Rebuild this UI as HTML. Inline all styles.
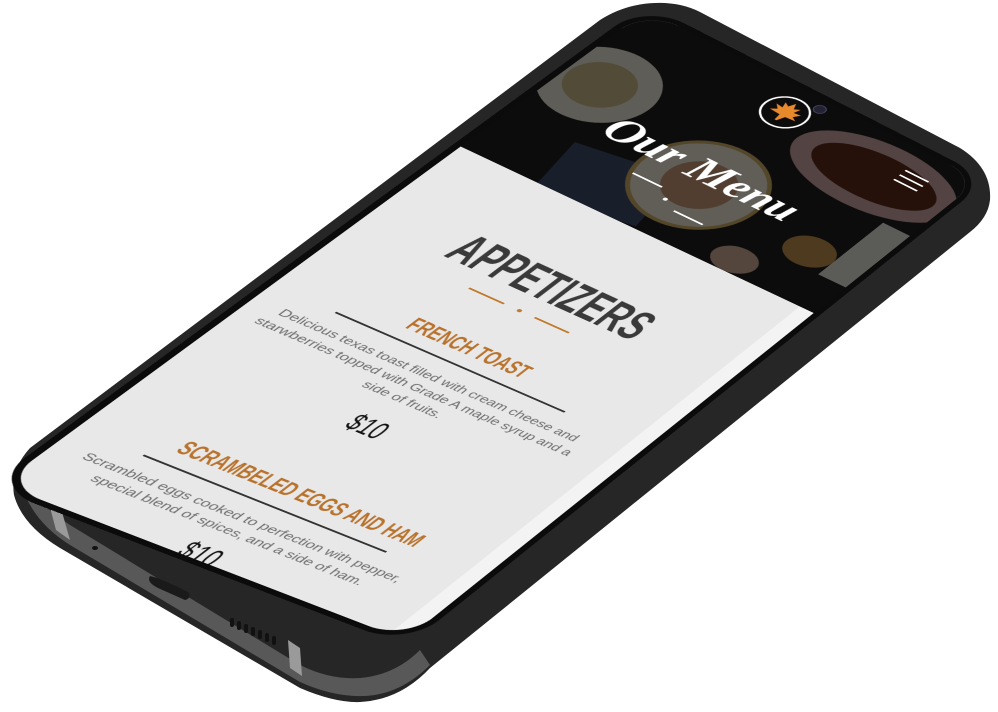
<!DOCTYPE html>
<html><head><meta charset="utf-8">
<style>
html,body{margin:0;padding:0;background:#fff;width:998px;height:712px;overflow:hidden}
#wrap{position:relative;width:998px;height:712px}
svg.body{position:absolute;left:0;top:0}
.screen{position:absolute;left:0;top:0;width:360px;height:760px;transform-origin:0 0;
transform:matrix3d(1.09169,0.50283,0,0.00017011,-0.85132,0.56584,0,-0.00011952,0,0,1,0,647,10,0,1);
background:#e8e8e8;border-radius:34px;overflow:hidden;box-shadow:0 0 0 6px #0b0b0b;font-family:"Liberation Sans",sans-serif}
.hdr{position:absolute;left:0;top:0;width:360px;height:234px;background:#1d1d1d;overflow:hidden}
.abs{position:absolute}
.c{position:absolute;left:0;width:334px;text-align:center;white-space:nowrap}
.cond{display:inline-block;font-weight:bold}
.desc{color:#6e6e6e;font-size:12.8px;line-height:18px}
</style></head><body><div id="wrap">
<svg class="body" width="998" height="712" viewBox="0 0 998 712">
<path d="M655,3 Q680,2 700,12 L960,148 Q992,168 990,200 Q988,218 970,232 L430,668 Q400,700 360,702 Q335,703 300,688 L60,548 Q22,525 14,495 Q10,470 30,448 L600,20 Q625,4 655,3 Z" fill="#262626"/>
<path d="M20,480 Q30,520 70,545 L300,682 Q340,700 375,695 Q405,690 430,665 L420,650 Q395,675 360,678 Q330,680 300,665 L70,525 Q40,505 20,480Z" fill="#585858"/>
<path d="M48,500 L62,512 L70,540 L56,530Z" fill="#9a9a9a"/>
<path d="M288,640 L300,648 L302,676 L290,668Z" fill="#9a9a9a"/>
<ellipse cx="95" cy="548" rx="3" ry="2" fill="#111"/>
<path d="M150,576 Q160,578 188,592 Q192,598 185,600 L158,588 Q146,582 150,576Z" fill="#1a1a1a"/>
<g fill="#111"><rect x="230" y="618" width="4" height="9" rx="2"/><rect x="237" y="621" width="4" height="9" rx="2"/><rect x="244" y="624" width="4" height="9" rx="2"/><rect x="251" y="627" width="4" height="9" rx="2"/><rect x="258" y="630" width="4" height="9" rx="2"/><rect x="265" y="633" width="4" height="9" rx="2"/><rect x="272" y="636" width="4" height="9" rx="2"/></g>
</svg>
<div class="screen">
 <div class="hdr">
  <div class="abs" style="left:70px;top:165px;width:95px;height:75px;background:#3c4866;transform:rotate(-10deg)"></div>
  <div class="abs" style="left:-17px;top:52px;width:100px;height:100px;border-radius:50%;background:#e2ddd0"></div>
  <div class="abs" style="left:3px;top:72px;width:60px;height:60px;border-radius:50%;background:#c2b384"></div>
  <div class="abs" style="left:117px;top:96px;width:120px;height:120px;border-radius:50%;background:#c9a860"></div>
  <div class="abs" style="left:121px;top:100px;width:112px;height:112px;border-radius:50%;background:#e6e0d0"></div>
  <div class="abs" style="left:145px;top:124px;width:64px;height:64px;border-radius:50%;background:#c49472"></div>
  <div class="abs" style="left:200px;top:10px;width:170px;height:90px;border-radius:50%;background:#c9a0a0"></div>
  <div class="abs" style="left:220px;top:25px;width:130px;height:60px;border-radius:50%;background:#5a2a18"></div>
  <div class="abs" style="left:280px;top:150px;width:50px;height:40px;border-radius:50%;background:#b88a4a"></div>
  <div class="abs" style="left:240px;top:200px;width:44px;height:34px;border-radius:50%;background:#c8a890"></div>
  <div class="abs" style="left:330px;top:100px;width:60px;height:90px;background:#d8d8d0"></div>
  <div class="abs" style="left:0;top:0;width:360px;height:234px;background:rgba(0,0,0,.58)"></div>
  <div class="abs" style="left:149px;top:12px;width:40px;height:40px;border-radius:50%;border:2px solid #fff"></div>
  <svg class="abs" style="left:155px;top:17px" width="32" height="32" viewBox="0 0 32 32"><path d="M16,2 L19,9 L24,6 L22,13 L29,12 L25,18 L30,21 L20,22 L17,30 L15,30 L14,22 L3,21 L8,17 L3,12 L10,13 L8,6 L13,9Z" fill="#e8892c"/></svg>
  <div class="abs" style="left:185px;top:6px;width:10px;height:10px;border-radius:50%;background:#223;border:1px solid #446"></div>
  <div class="abs" style="left:300px;top:30px;width:26px;height:2px;background:#fff"></div>
  <div class="abs" style="left:300px;top:38px;width:26px;height:2px;background:#fff"></div>
  <div class="abs" style="left:300px;top:46px;width:26px;height:2px;background:#fff"></div>
  <div class="c" style="top:112px;font-family:'Liberation Serif',serif;font-style:italic;font-weight:bold;font-size:44px;color:#fff">Our Menu</div>
  <div class="abs" style="left:125px;top:176px;width:30px;height:2px;background:#fff"></div>
  <div class="abs" style="left:165px;top:186px;width:4px;height:4px;border-radius:50%;background:#fff"></div>
  <div class="abs" style="left:182px;top:195px;width:30px;height:2px;background:#fff"></div>
 </div>
 <div class="abs" style="left:345px;top:234px;width:15px;height:526px;background:#f3f3f3"></div>
 <div class="c" style="top:307px;font-size:54px;line-height:56px;color:#3a3a3a"><span class="cond" style="transform:scaleX(.55)">APPETIZERS</span></div>
 <div class="abs" style="left:118px;top:373px;width:34px;height:2px;background:#c07a2c"></div>
 <div class="abs" style="left:165px;top:372px;width:4px;height:4px;border-radius:50%;background:#c07a2c"></div>
 <div class="abs" style="left:182px;top:373px;width:34px;height:2px;background:#c07a2c"></div>
 <div class="c" style="top:422px;font-size:24px;line-height:28px;color:#b8722c"><span class="cond" style="transform:scaleX(.6)">FRENCH TOAST</span></div>
 <div class="abs" style="left:58px;top:457px;width:220px;height:1.5px;background:#333"></div>
 <div class="c desc" style="top:472px">Delicious texas toast filled with cream cheese and<br>starwberries topped with Grade A maple syrup and a<br>side of fruits.</div>
 <div class="c" style="top:544px;font-size:30px;line-height:32px;color:#111"><span class="cond" style="transform:scaleX(.6);font-weight:normal">$10</span></div>
 <div class="c" style="top:641px;font-size:24px;line-height:28px;color:#b8722c"><span class="cond" style="transform:scaleX(.6)">SCRAMBELED EGGS AND HAM</span></div>
 <div class="abs" style="left:58px;top:677px;width:220px;height:1.5px;background:#333"></div>
 <div class="c desc" style="top:692px">Scrambled eggs cooked to perfection with pepper,<br>special blend of spices, and a side of ham.</div>
 <div class="c" style="top:738px;font-size:30px;line-height:32px;color:#111"><span class="cond" style="transform:scaleX(.6);font-weight:normal">$10</span></div>
</div>
</div></body></html>
